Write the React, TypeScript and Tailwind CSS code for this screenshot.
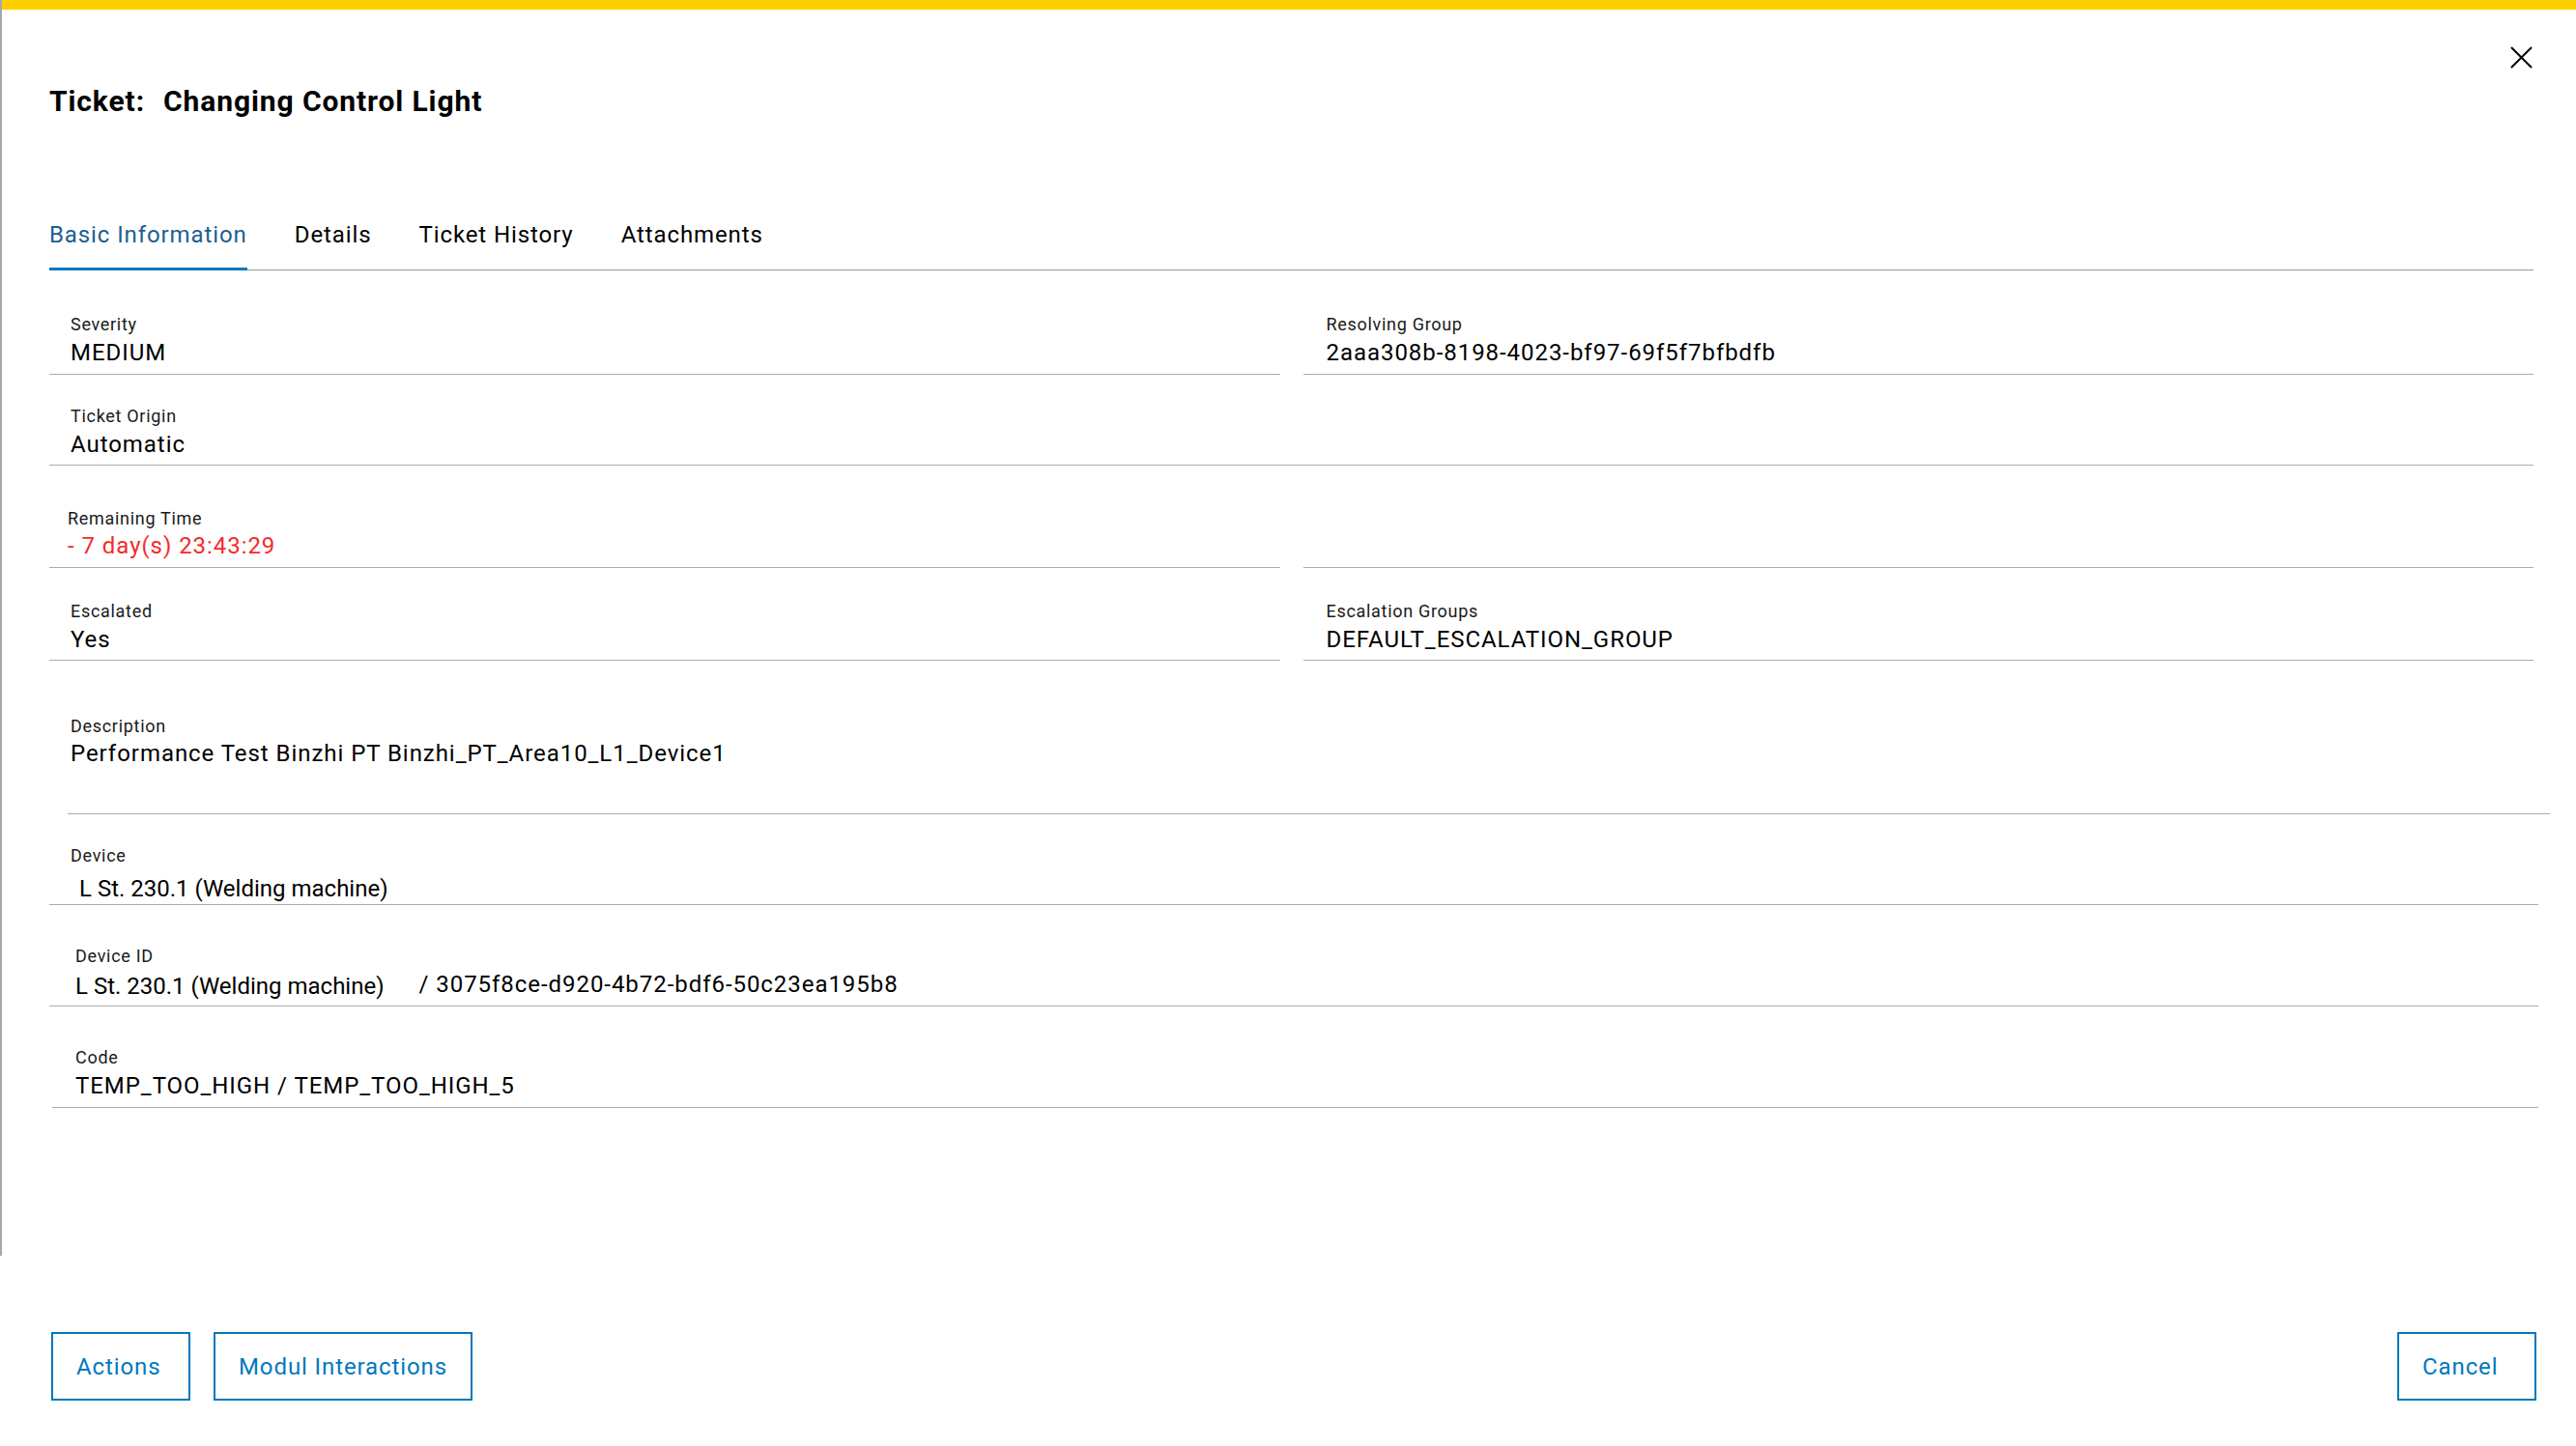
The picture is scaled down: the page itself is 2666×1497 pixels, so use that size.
const font = { fontFamily: 'Roboto, "Noto Sans", sans-serif' }

function Field({
  label,
  value,
  className = '',
  valueClass = '',
}: {
  label?: string
  value?: React.ReactNode
  className?: string
  valueClass?: string
}) {
  return (
    <div className={`border-b border-[#a8acb0] ${className}`}>
      {label && <div className="text-[18px] leading-[24px] tracking-[0.7px] text-[#1a1a1a]">{label}</div>}
      {value !== undefined && (
        <div className={`text-[24px] leading-[30px] tracking-[0.95px] ${valueClass}`}>{value}</div>
      )}
    </div>
  )
}

export default function App() {
  const tabs = ['Basic Information', 'Details', 'Ticket History', 'Attachments']

  return (
    <div className="relative flex w-full h-[1497px] bg-white overflow-hidden" style={font}>
      {/* page behind the dialog peeking out on the left */}
      <div className="w-[2px] h-[1300px] shrink-0 bg-[#a3a8ad]" />

      <div className="flex-1 flex flex-col">
        <div className="h-[10px] bg-[#ffcf00]" />

        <button className="absolute top-[48px] left-[2598px] text-black">
          <svg width="23" height="23" viewBox="0 0 23 23" fill="none" stroke="currentColor" strokeWidth={2}>
            <path d="M1 1L22 22M22 1L1 22" />
          </svg>
        </button>

        <div className="pl-[49px] pr-[44px]">
          <h1 className="mt-[77px] text-[30px] leading-[36px] font-bold tracking-[0.9px] text-black">
            Ticket:<span className="ml-[19px]">Changing Control Light</span>
          </h1>

          {/* tabs */}
          <div className="mt-[104px] flex gap-[49px] border-b border-[#999999]">
            {tabs.map((t, i) => (
              <div
                key={t}
                className={`-mb-px pb-[18px] text-[24px] leading-[32px] tracking-[0.9px] border-b-[3px] ${
                  i === 0 ? 'border-[#0078be] text-[#1c5f91]' : 'border-transparent text-black'
                }`}
              >
                {t}
              </div>
            ))}
          </div>

          {/* fields */}
          <div className="grid grid-cols-2 gap-x-[24px] mt-[44px]">
            <Field label="Severity" value="MEDIUM" className="pl-[22px] pb-[7px]" valueClass="mt-[2px] text-black" />
            <Field
              label="Resolving Group"
              value="2aaa308b-8198-4023-bf97-69f5f7bfbdfb"
              className="pl-[24px] pb-[7px]"
              valueClass="mt-[2px] text-black"
            />
          </div>

          <Field label="Ticket Origin" value="Automatic" className="mt-[31px] pl-[22px] pb-[6px]" valueClass="mt-[2px] text-black" />

          <div className="grid grid-cols-2 gap-x-[24px] mt-[43px]">
            <Field
              label="Remaining Time"
              value="- 7 day(s) 23:43:29"
              className="pl-[19px] pb-[7px]"
              valueClass="mt-[1px] text-[#f52a2a]"
            />
            <div className="border-b border-[#a8acb0]" />
          </div>

          <div className="grid grid-cols-2 gap-x-[24px] mt-[33px]">
            <Field label="Escalated" value="Yes" className="pl-[22px] pb-[6px]" valueClass="mt-[2px] text-black" />
            <Field
              label="Escalation Groups"
              value="DEFAULT_ESCALATION_GROUP"
              className="pl-[24px] pb-[6px]"
              valueClass="mt-[2px] text-black"
            />
          </div>

          <Field
            label="Description"
            value="Performance Test Binzhi PT Binzhi_PT_Area10_L1_Device1"
            className="mt-[56px] ml-[19px] -mr-[17px] pl-[3px] pb-[47px]"
            valueClass="mt-[1px] text-black"
          />

          <Field
            label="Device"
            value="L St. 230.1 (Welding machine)"
            className="mt-[31px] pl-[22px] -mr-[5px] pb-[1px]"
            valueClass="mt-[7px] pl-[9px] text-black !tracking-normal"
          />

          <Field
            label="Device ID"
            value={
              <div className="flex items-end">
                <span className="tracking-normal">L St. 230.1 (Welding machine)</span>
                <span className="ml-[36px] -translate-y-[2px]">/ 3075f8ce-d920-4b72-bdf6-50c23ea195b8</span>
              </div>
            }
            className="mt-[41px] pl-[27px] -mr-[5px] pb-[5px]"
            valueClass="mt-[4px] text-black"
          />

          <Field
            label="Code"
            value="TEMP_TOO_HIGH / TEMP_TOO_HIGH_5"
            className="mt-[41px] ml-[3px] pl-[24px] -mr-[5px] pb-[7px]"
            valueClass="mt-[2px] text-black"
          />
        </div>

        {/* footer */}
        <div className="mt-auto mb-[47px] pl-[51px] pr-[41px] flex items-center">
          <div className="flex gap-[24px]">
            <button className="h-[71px] min-w-[144px] pl-[24px] pr-[22px] text-left border-2 border-[#0078be] text-[#0078be] text-[24px] tracking-[0.9px]">
              Actions
            </button>
            <button className="h-[71px] min-w-[144px] pl-[24px] pr-[24px] text-left border-2 border-[#0078be] text-[#0078be] text-[24px] tracking-[0.9px]">
              Modul Interactions
            </button>
          </div>
          <button className="ml-auto h-[71px] min-w-[144px] pl-[24px] pr-[22px] text-left border-2 border-[#0078be] text-[#0078be] text-[24px] tracking-[0.9px]">
            Cancel
          </button>
        </div>
      </div>
    </div>
  )
}
